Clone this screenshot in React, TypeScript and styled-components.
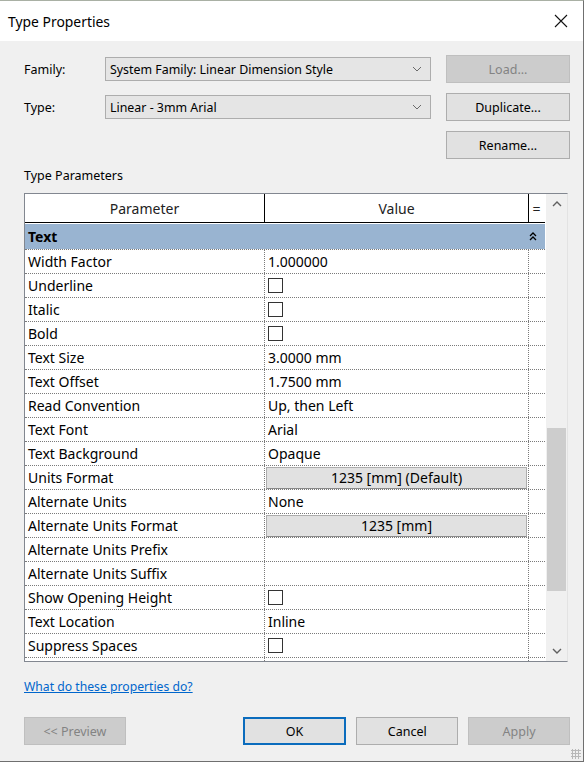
import React from "react";
import styled, { createGlobalStyle } from "styled-components";

const Global = createGlobalStyle`
  html, body { margin: 0; padding: 0; background: #ffffff; }
  body { font-family: "Noto Sans", "Open Sans", sans-serif; font-size: 14px; color: #000; }
`;

const Window = styled.div`
  width: 583px;
  height: 760px;
  border-top: 1px solid #a9b0a4;
  border-right: 1px solid #6f6f6f;
  border-bottom: 1px solid #6f6f6f;
  background: #f0f0f0;
  display: flex;
  flex-direction: column;
  position: relative;
  box-sizing: content-box;
`;

const TitleBar = styled.div`
  height: 40px;
  background: #ffffff;
  display: flex;
  align-items: center;
  justify-content: space-between;
  padding: 0 14px 0 8px;
`;

const Title = styled.div`
  font-size: 13.9px;
  color: #000;
`;

const Close = styled.div`
  width: 16px;
  height: 16px;
  display: flex;
  align-items: center;
  justify-content: center;
`;

const Body = styled.div`
  flex: 1;
  display: flex;
  flex-direction: column;
  padding: 14px 13px 0 24px;
`;

const TopGrid = styled.div`
  display: grid;
  grid-template-columns: 66px 326px 124px;
  column-gap: 15px;
  row-gap: 10px;
  align-items: center;
`;

const Label = styled.div`
  font-size: 12.5px;
`;

const Combo = styled.div`
  height: 22px;
  border: 1px solid #adadad;
  background: #e5e5e5;
  display: flex;
  align-items: center;
  justify-content: space-between;
  padding: 0 8px 0 4px;
  font-size: 12.4px;
`;

const Btn = styled.div<{ $disabled?: boolean; $primary?: boolean; $w?: number }>`
  height: ${(p) => (p.$primary ? 24 : 26)}px;
  width: ${(p) => (p.$w ? p.$w - 2 : 122)}px;
  border: ${(p) => (p.$primary ? "2px solid #0b6cbd" : "1px solid " + (p.$disabled ? "#bfbfbf" : "#adadad"))};
  background: ${(p) => (p.$disabled ? "#cccccc" : "#e1e1e1")};
  color: ${(p) => (p.$disabled ? "#838383" : "#000")};
  display: flex;
  align-items: center;
  justify-content: center;
  font-size: 12.5px;
`;

const SectionLabel = styled.div`
  margin-top: 8px;
  font-size: 12.5px;
  height: 18px;
  line-height: 18px;
`;

const Table = styled.div`
  margin-top: 8px;
  width: 542px;
  height: 467px;
  border: 1px solid #828790;
  border-right-color: #e3e3e3;
  background: #ffffff;
  display: flex;
  overflow: hidden;
`;

const Grid = styled.div`
  width: 520px;
  display: flex;
  flex-direction: column;
  overflow: hidden;
`;

const HeaderRow = styled.div`
  display: grid;
  grid-template-columns: 240px 264px 15px;
  height: 28px;
  border-bottom: 1px solid #000;
  flex-shrink: 0;
`;

const HeaderCell = styled.div<{ $last?: boolean }>`
  border-right: ${(p) => (p.$last ? "none" : "1px solid #000")};
  display: flex;
  align-items: center;
  justify-content: center;
  font-size: 14px;
  color: #222;
`;

const GroupRow = styled.div`
  margin-top: 1px;
  height: 25px;
  background: #99b4d1;
  display: flex;
  align-items: center;
  justify-content: space-between;
  padding: 0 8px 0 3px;
  font-weight: bold;
  font-size: 14px;
  flex-shrink: 0;
`;

const Row = styled.div`
  display: grid;
  grid-template-columns: 240px 264px 16px;
  height: 24px;
  flex-shrink: 0;
  border-top: 1px dotted #7a7a7a;
  box-sizing: border-box;
`;

const Cell = styled.div<{ $last?: boolean }>`
  border-right: ${(p) => (p.$last ? "none" : "1px dotted #7a7a7a")};
  display: flex;
  align-items: center;
  padding-left: 3px;
  font-size: 14px;
  color: #000;
  white-space: nowrap;
`;

const ValueButton = styled.div`
  margin-left: -2px;
  width: 259px;
  height: 20px;
  background: #e1e1e1;
  border: 1px solid #adadad;
  border-bottom-color: #8a8a8a;
  display: flex;
  align-items: center;
  justify-content: center;
  font-size: 14px;
`;

const Check = styled.div`
  width: 13px;
  height: 13px;
  border: 1px solid #333;
  background: #fff;
`;

const Scrollbar = styled.div`
  width: 21px;
  background: #f0f0f0;
  border-left: 1px solid #ffffff;
  display: flex;
  flex-direction: column;
  align-items: center;
`;

const ArrowBox = styled.div`
  height: 20px;
  width: 20px;
  display: flex;
  align-items: center;
  justify-content: center;
`;

const Track = styled.div`
  flex: 1;
  width: 19px;
  display: flex;
  flex-direction: column;
  padding-top: 214px;
  padding-bottom: 50px;
`;

const Thumb = styled.div`
  flex: 1;
  background: #cdcdcd;
`;

const Link = styled.a`
  margin-top: 16px;
  font-size: 12.2px;
  color: #0066cc;
  text-decoration: underline;
  height: 18px;
`;

const Footer = styled.div`
  margin-top: 21px;
  display: flex;
  align-items: center;
`;

const Spacer = styled.div`
  width: 118px;
`;

const FooterGap = styled.div`
  width: 10px;
`;

const Grip = styled.div`
  position: absolute;
  right: 2px;
  bottom: 2px;
  width: 10px;
  height: 10px;
  background-image: radial-gradient(circle, #b8b8b8 1px, transparent 1.2px);
  background-size: 3px 3px;
`;

type R = { name: string; kind: "text" | "check" | "button" | "empty"; value?: string };

const rows: R[] = [
  { name: "Width Factor", kind: "text", value: "1.000000" },
  { name: "Underline", kind: "check" },
  { name: "Italic", kind: "check" },
  { name: "Bold", kind: "check" },
  { name: "Text Size", kind: "text", value: "3.0000 mm" },
  { name: "Text Offset", kind: "text", value: "1.7500 mm" },
  { name: "Read Convention", kind: "text", value: "Up, then Left" },
  { name: "Text Font", kind: "text", value: "Arial" },
  { name: "Text Background", kind: "text", value: "Opaque" },
  { name: "Units Format", kind: "button", value: "1235 [mm] (Default)" },
  { name: "Alternate Units", kind: "text", value: "None" },
  { name: "Alternate Units Format", kind: "button", value: "1235 [mm]" },
  { name: "Alternate Units Prefix", kind: "empty" },
  { name: "Alternate Units Suffix", kind: "empty" },
  { name: "Show Opening Height", kind: "check" },
  { name: "Text Location", kind: "text", value: "Inline" },
  { name: "Suppress Spaces", kind: "check" },
  { name: "", kind: "empty" },
];

const ChevronDown = () => (
  <svg width="10" height="6" viewBox="0 0 10 6">
    <path d="M1 1 L5 5 L9 1" fill="none" stroke="#6a6a6a" strokeWidth="1" />
  </svg>
);

export default function App() {
  return (
    <>
      <Global />
      <Window>
        <TitleBar>
          <Title>Type Properties</Title>
          <Close>
            <svg width="14" height="14" viewBox="0 0 14 14">
              <path d="M1 1 L13 13 M13 1 L1 13" stroke="#111" strokeWidth="1.1" />
            </svg>
          </Close>
        </TitleBar>
        <Body>
          <TopGrid>
            <Label>Family:</Label>
            <Combo>
              <span>System Family: Linear Dimension Style</span>
              <ChevronDown />
            </Combo>
            <Btn $disabled>Load...</Btn>
            <Label>Type:</Label>
            <Combo>
              <span>Linear - 3mm Arial</span>
              <ChevronDown />
            </Combo>
            <Btn>Duplicate...</Btn>
            <div />
            <div />
            <Btn>Rename...</Btn>
          </TopGrid>
          <SectionLabel>Type Parameters</SectionLabel>
          <Table>
            <Grid>
              <HeaderRow>
                <HeaderCell>Parameter</HeaderCell>
                <HeaderCell>Value</HeaderCell>
                <HeaderCell $last>=</HeaderCell>
              </HeaderRow>
              <GroupRow>
                <span>Text</span>
                <svg width="8" height="9" viewBox="0 0 8 9">
                  <path d="M1 4 L4 1 L7 4 M1 8 L4 5 L7 8" fill="none" stroke="#000" strokeWidth="1.3" />
                </svg>
              </GroupRow>
              {rows.map((r, i) => (
                <Row key={i}>
                  <Cell>{r.name}</Cell>
                  <Cell>
                    {r.kind === "text" && r.value}
                    {r.kind === "check" && <Check />}
                    {r.kind === "button" && <ValueButton>{r.value}</ValueButton>}
                  </Cell>
                  <Cell $last />
                </Row>
              ))}
            </Grid>
            <Scrollbar>
              <ArrowBox>
                <svg width="10" height="6" viewBox="0 0 10 6">
                  <path d="M1 5 L5 1 L9 5" fill="none" stroke="#606060" strokeWidth="1.4" />
                </svg>
              </ArrowBox>
              <Track>
                <Thumb />
              </Track>
              <ArrowBox>
                <svg width="10" height="6" viewBox="0 0 10 6">
                  <path d="M1 1 L5 5 L9 1" fill="none" stroke="#606060" strokeWidth="1.4" />
                </svg>
              </ArrowBox>
            </Scrollbar>
          </Table>
          <Link>What do these properties do?</Link>
          <Footer>
            <Btn $disabled $w={103}>&lt;&lt; Preview</Btn>
            <Spacer />
            <Btn $primary $w={103}>OK</Btn>
            <FooterGap />
            <Btn $w={103}>Cancel</Btn>
            <FooterGap />
            <Btn $disabled $w={103}>Apply</Btn>
          </Footer>
        </Body>
        <Grip />
      </Window>
    </>
  );
}
